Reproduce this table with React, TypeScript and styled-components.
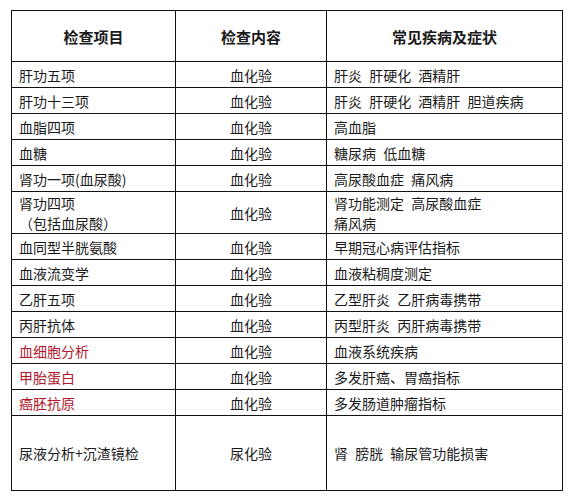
import styled, { createGlobalStyle } from 'styled-components'

const GlobalStyle = createGlobalStyle`
  html, body {
    margin: 0;
    padding: 0;
    background: #fff;
  }
  body {
    font-family: "Noto Sans CJK SC", "Noto Sans", sans-serif;
    color: #1a1a1a;
  }
`

const Page = styled.div`
  padding: 10px 0 0 11px;
`

const Table = styled.table`
  border-collapse: collapse;
  table-layout: fixed;
  width: 549px;
`

const HeadCell = styled.th<{ width: number }>`
  width: ${({ width }) => width}px;
  height: 50px;
  padding: 0;
  border: 1px solid #111;
  font-size: 15px;
  font-weight: 700;
  text-align: center;
  vertical-align: middle;
`

const Cell = styled.td<{ center?: boolean; red?: boolean; tall?: number }>`
  height: ${({ tall }) => tall ?? 25}px;
  padding: 0 7px;
  border: 1px solid #111;
  font-size: 14px;
  line-height: 20px;
  word-spacing: 4px;
  color: ${({ red }) => (red ? '#b3172b' : '#1a1a1a')};
  text-align: ${({ center }) => (center ? 'center' : 'left')};
  vertical-align: middle;
  white-space: pre-line;
`

interface Item {
  name: string
  kind: string
  note: string
  red?: boolean
  tall?: number
}

const items: Item[] = [
  { name: '肝功五项', kind: '血化验', note: '肝炎 肝硬化 酒精肝' },
  { name: '肝功十三项', kind: '血化验', note: '肝炎 肝硬化 酒精肝 胆道疾病' },
  { name: '血脂四项', kind: '血化验', note: '高血脂' },
  { name: '血糖', kind: '血化验', note: '糖尿病 低血糖' },
  { name: '肾功一项(血尿酸)', kind: '血化验', note: '高尿酸血症 痛风病' },
  { name: '肾功四项\n（包括血尿酸）', kind: '血化验', note: '肾功能测定 高尿酸血症\n痛风病', tall: 41 },
  { name: '血同型半胱氨酸', kind: '血化验', note: '早期冠心病评估指标' },
  { name: '血液流变学', kind: '血化验', note: '血液粘稠度测定' },
  { name: '乙肝五项', kind: '血化验', note: '乙型肝炎 乙肝病毒携带' },
  { name: '丙肝抗体', kind: '血化验', note: '丙型肝炎 丙肝病毒携带' },
  { name: '血细胞分析', kind: '血化验', note: '血液系统疾病', red: true },
  { name: '甲胎蛋白', kind: '血化验', note: '多发肝癌、胃癌指标', red: true },
  { name: '癌胚抗原', kind: '血化验', note: '多发肠道肿瘤指标', red: true },
  { name: '尿液分析+沉渣镜检', kind: '尿化验', note: '肾 膀胱 输尿管功能损害', tall: 74 },
]

export default function App() {
  return (
    <Page>
      <GlobalStyle />
      <Table>
        <thead>
          <tr>
            <HeadCell width={163}>检查项目</HeadCell>
            <HeadCell width={150}>检查内容</HeadCell>
            <HeadCell width={235}>常见疾病及症状</HeadCell>
          </tr>
        </thead>
        <tbody>
          {items.map((it) => (
            <tr key={it.name}>
              <Cell red={it.red} tall={it.tall}>
                {it.name}
              </Cell>
              <Cell center tall={it.tall}>
                {it.kind}
              </Cell>
              <Cell tall={it.tall}>{it.note}</Cell>
            </tr>
          ))}
        </tbody>
      </Table>
    </Page>
  )
}
